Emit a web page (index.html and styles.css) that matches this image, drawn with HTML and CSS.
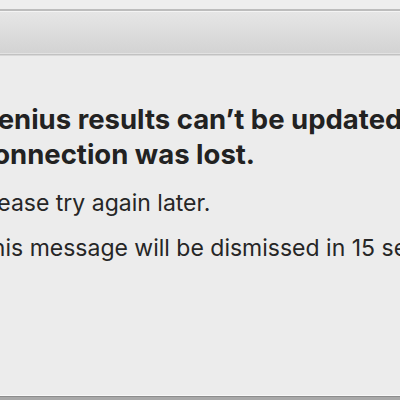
FILE: index.html
```html
<!DOCTYPE html>
<html lang="en">
<head>
<meta charset="utf-8">
<title>Genius</title>
<link rel="stylesheet" href="styles.css">
</head>
<body>
<div class="window">
  <div class="topstrip"></div>
  <div class="toolbar"></div>
  <main class="content">
    <div class="message">
      <h1 class="title">Genius results can’t be updated because the<br>connection was lost.</h1>
      <p class="info">Please try again later.</p>
      <p class="info">This message will be dismissed in 15 seconds.</p>
    </div>
  </main>
  <div class="bottom"></div>
</div>
</body>
</html>
```
FILE: styles.css
```css
html, body {
  margin: 0;
  padding: 0;
  width: 400px;
  height: 400px;
  overflow: hidden;
  background: #ececec;
}
.window {
  display: flex;
  flex-direction: column;
  height: 400px;
  width: 400px;
  overflow: hidden;
}
.topstrip {
  height: 9px;
  flex: none;
  background: #eeeeee;
  border-bottom: 2px solid #bdbdbd;
}
.toolbar {
  flex: none;
  height: 41px;
  border-top: 1px solid #f4f4f4;
  background: linear-gradient(#e6e6e6, #d3d3d3);
  border-bottom: 1px solid #e2e2e2;
  box-shadow: 0 1px 0 #c2c2c2, 0 2px 0 #d8d8d8;
}
.content {
  flex: 1;
  padding-top: 48px;
  overflow: hidden;
}
.message {
  margin-left: -23px;
  width: 700px;
  font-family: "Inter", "Liberation Sans", sans-serif;
  color: #222222;
}
.title {
  margin: 0;
  font-size: 27.5px;
  font-weight: 700;
  line-height: 35px;
  white-space: nowrap;
}
.info {
  margin: 17px 0 0 0;
  font-size: 23px;
  font-weight: 400;
  line-height: 28px;
  white-space: nowrap;
  color: #262626;
}
.bottom {
  flex: none;
  height: 4px;
  background: #a8a8a8;
  border-top: 1px solid #f8f8f8;
  box-shadow: inset 0 1px 0 #8c8c8c;
}
```
